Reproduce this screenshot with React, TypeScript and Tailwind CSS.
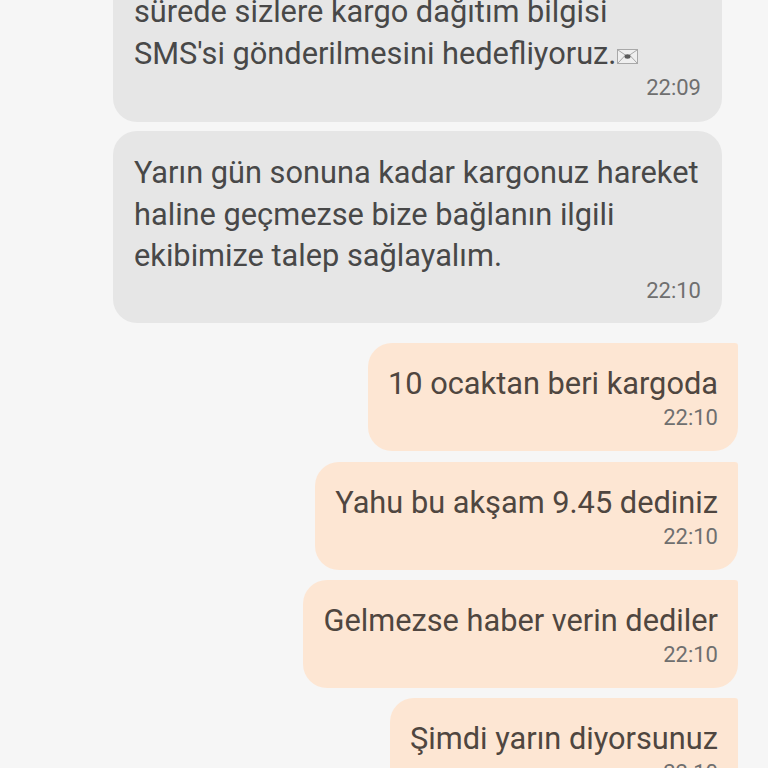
// SMS conversation thread, cropped mid-scroll.
const FONT = "font-['Roboto',sans-serif]";

function Time({ children }: { children: string }) {
  return <div className="text-right text-[22px] leading-[28px] text-[#6f6f6f]">{children}</div>;
}

function Incoming({ lines, time, className = "", envelope = false }: { lines: string[]; time: string; className?: string; envelope?: boolean }) {
  return (
    <div className={`ml-[113px] w-[609px] rounded-[24px] bg-[#e6e6e6] pl-[21px] pr-[21px] pt-[21px] ${className}`}>
      <div className="text-[30.75px] leading-[41.5px] whitespace-nowrap text-[#484848]">
        {lines.map((line, i) => (
          <div key={i} className="flex items-center">
            {line}
            {envelope && i === lines.length - 1 && <Envelope />}
          </div>
        ))}
      </div>
      <Time>{time}</Time>
    </div>
  );
}

function Envelope() {
  return (
    <svg viewBox="0 0 21 15" className="ml-[1px] mt-[7px] h-[15px] w-[21px]" aria-hidden>
      <rect x="0.5" y="0.5" width="20" height="14" fill="#efefef" stroke="#a8a8a8" />
      <path d="M1 1 L10.5 7.5 L20 1 M1 14 L8 6.5 M20 14 L13 6.5" fill="none" stroke="#a8a8a8" />
      <ellipse cx="10.5" cy="7.5" rx="3" ry="2.2" fill="#5c5c5c" />
    </svg>
  );
}

function Outgoing({ text, time, className = "" }: { text: string; time: string; className?: string }) {
  return (
    <div className={`w-fit self-end rounded-l-[24px] rounded-br-[24px] rounded-tr-[3px] bg-[#fde6d3] pl-[20px] pr-[20px] pt-[20px] pb-[19px] ${className}`}>
      <div className="text-[30.75px] leading-[41px] whitespace-nowrap text-[#4f4640]">{text}</div>
      <Time>{time}</Time>
    </div>
  );
}

export default function App() {
  return (
    <div className={`${FONT} flex h-[768px] w-[768px] flex-col overflow-hidden bg-[#f6f6f6] pr-[30px]`}>
      <Incoming
        className="mt-[-30px] pb-[20px]"
        envelope
        lines={["sürede sizlere kargo dağıtım bilgisi", "SMS'si gönderilmesini hedefliyoruz."]}
        time="22:09"
      />
      <Incoming
        className="mt-[9px] pb-[18px]"
        lines={["Yarın gün sonuna kadar kargonuz hareket", "haline geçmezse bize bağlanın ilgili", "ekibimize talep sağlayalım."]}
        time="22:10"
      />
      <Outgoing className="mt-[20px]" text="10 ocaktan beri kargoda" time="22:10" />
      <Outgoing className="mt-[11px]" text="Yahu bu akşam 9.45 dediniz" time="22:10" />
      <Outgoing className="mt-[10px]" text="Gelmezse haber verin dediler" time="22:10" />
      <Outgoing className="mt-[10px]" text="Şimdi yarın diyorsunuz" time="22:10" />
    </div>
  );
}
